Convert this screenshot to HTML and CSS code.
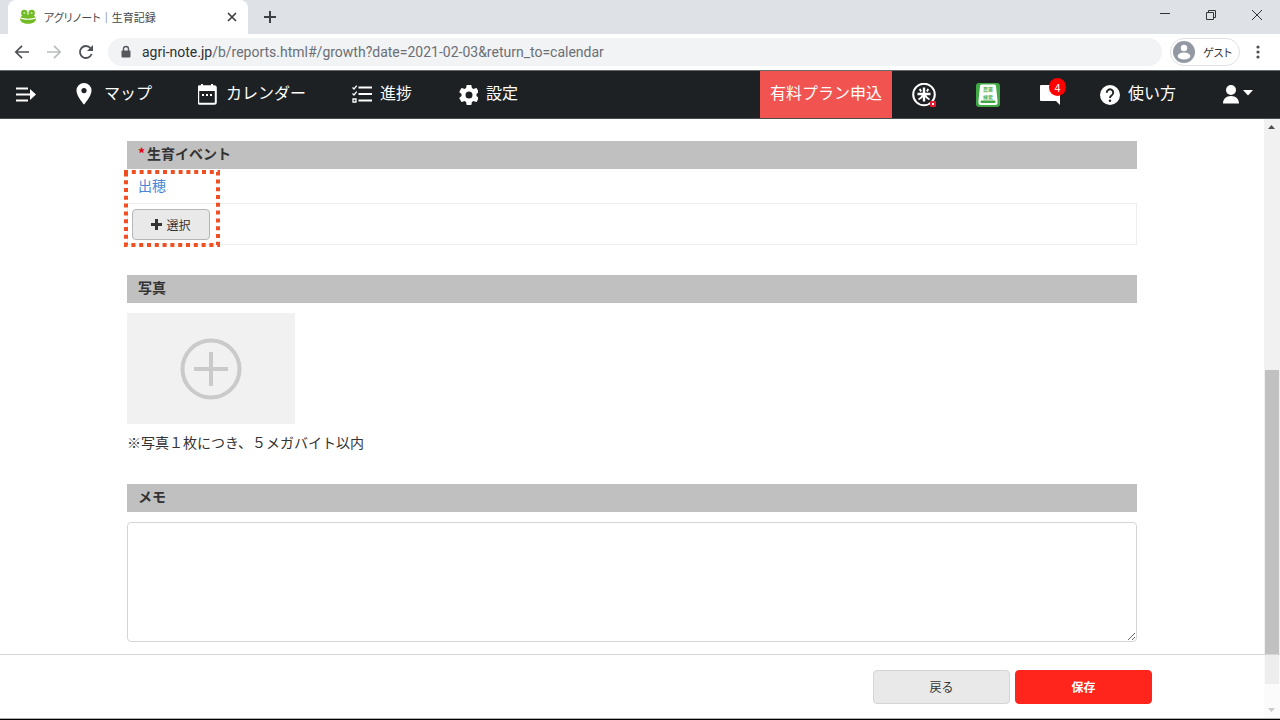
FILE: index.html
```html
<!DOCTYPE html>
<html lang="ja">
<head>
<meta charset="utf-8">
<title>アグリノート｜生育記録</title>
<link rel="stylesheet" href="styles.css">
</head>
<body>
<div class="window">
  <div class="tabstrip">
    <div class="tab">
      <svg class="favicon" width="16" height="16" viewBox="0 0 16 16"><g fill="#73bb25"><circle cx="4.300" cy="4" r="3.200"/><circle cx="11.700" cy="4" r="3.200"/><path d="M.500 8.500C1.500 6 4 5.500 8 5.500s6.500.500 7.500 3c-4.500 1.500-10.500 1.500-15 0z"/><path d="M0 9.500c4.500 1.800 11.500 1.800 16 0-.200 3.800-3.500 5.300-8 5.300S.200 13.300 0 9.500z"/></g><g fill="#c5e6a0"><circle cx="4.300" cy="4" r="1"/><circle cx="11.700" cy="4" r="1"/></g></svg>
      <span class="tab-title">アグリノート｜生育記録</span>
      <button class="plain" aria-label="タブを閉じる"><svg width="10" height="10" viewBox="0 0 10 10"><path d="M1 1l8 8M9 1L1 9" stroke="#3c4043" stroke-width="1.700"/></svg></button>
    </div>
    <button class="plain new-tab" aria-label="新しいタブ"><svg width="12" height="12" viewBox="0 0 12 12"><path d="M6 0v12M0 6h12" stroke="#3c4043" stroke-width="2"/></svg></button>
    <div class="window-controls">
      <button class="plain" aria-label="最小化"><svg width="12" height="12" viewBox="0 0 12 12"><path d="M1 4.500h10" stroke="#333"/></svg></button>
      <button class="plain" aria-label="元に戻す"><svg width="12" height="12" viewBox="0 0 12 12"><path d="M1.500 3.500h7v7h-7zM3.500 3.500v-2h7v7h-2" fill="none" stroke="#333"/></svg></button>
      <button class="plain" aria-label="閉じる"><svg width="12" height="12" viewBox="0 0 12 12"><path d="M1 1l10 10M11 1L1 11" stroke="#333"/></svg></button>
    </div>
  </div>

  <div class="toolbar">
    <button class="plain" aria-label="戻る"><svg width="16" height="16" viewBox="0 0 16 16"><path d="M15 8H2M8 1.800L1.800 8 8 14.200" fill="none" stroke="#4d5156" stroke-width="1.700"/></svg></button>
    <button class="plain" aria-label="進む"><svg width="16" height="16" viewBox="0 0 16 16"><path d="M1 8h13M8 1.800L14.200 8 8 14.200" fill="none" stroke="#babcbe" stroke-width="1.700"/></svg></button>
    <button class="plain" aria-label="再読み込み"><svg width="16" height="16" viewBox="0 0 16 16"><path d="M13.600 10A6 6 0 1 1 12.600 4.200L13.500 5.200" fill="none" stroke="#4d5156" stroke-width="1.800"/><path d="M15 1v6H9z" fill="#4d5156"/></svg></button>
    <div class="address">
      <svg width="12" height="14" viewBox="0 0 12 14"><path d="M3.500 6V4a2.500 2.500 0 0 1 5 0v2" fill="none" stroke="#55595e" stroke-width="1.400"/><rect x="1.500" y="5.500" width="9" height="7" rx="1" fill="#55595e"/></svg>
      <span class="url"><span class="host">agri-note.jp</span>/b/reports.html#/growth?date=2021-02-03&amp;return_to=calendar</span>
    </div>
    <button class="guest"><svg width="22" height="22" viewBox="0 0 22 22"><circle cx="11" cy="11" r="11" fill="#9299a2"/><circle cx="11" cy="7" r="3.200" fill="#fff"/><ellipse cx="11" cy="15" rx="6.300" ry="3.600" fill="#fff"/></svg><span>ゲスト</span></button>
    <button class="plain" aria-label="メニュー"><svg width="4" height="16" viewBox="0 0 4 16"><g fill="#4d5156"><circle cx="2" cy="3" r="1.600"/><circle cx="2" cy="8" r="1.600"/><circle cx="2" cy="13" r="1.600"/></g></svg></button>
  </div>

  <nav class="navbar">
    <button class="plain nav-menu" aria-label="メニューを開く"><svg width="22" height="20" viewBox="0 0 22 20"><path d="M1 3.500h12M1 9.500h15M1 15.500h12" stroke="#fff" stroke-width="2.200"/><path d="M15 4l6 5.500-6 5.500z" fill="#fff"/></svg></button>
    <div class="nav-main">
      <a href="#map" class="nav-link"><svg width="20" height="24" viewBox="0 0 20 24"><path fill-rule="evenodd" d="M8 0a7.500 7.500 0 0 0-7.500 7.700C.500 13 8 21.500 8 21.500s7.500-8.500 7.500-13.800A7.500 7.500 0 0 0 8 0zm0 5a2.600 2.600 0 1 1 0 5.200A2.600 2.600 0 0 1 8 5z" fill="#fff"/></svg><span class="nav-text">マップ</span></a>
      <a href="#calendar" class="nav-link"><svg width="20" height="24" viewBox="1 0 20 24"><rect x="1.200" y="3.200" width="17.600" height="17.600" rx="1.500" fill="none" stroke="#fff" stroke-width="2"/><path d="M1 3h18v5H1zM4 1h2v4H4zM14 1h2v4h-2zM5 11h2v2H5zM9 11h2v2H9zM13 11h2v2h-2z" fill="#fff"/></svg><span class="nav-text">カレンダー</span></a>
      <a href="#progress" class="nav-link"><svg width="20" height="20" viewBox="0 0 20 20"><path d="M6.500 2.500H20M6.500 9H20M6.500 15.500H20" stroke="#fff" stroke-width="2.200"/><path d="M.500 2.500L2 4 4.700.700M.500 8.500L2 10l2.700-3.300M1 14h3v3H1z" fill="none" stroke="#fff" stroke-width="1.300"/></svg><span class="nav-text">進捗</span></a>
      <a href="#settings" class="nav-link"><svg width="20" height="20" viewBox="2 3 20 20"><path fill="#fff" d="M19.430 12.980c.040-.320.070-.640.070-.980s-.030-.660-.070-.980l2.110-1.650c.190-.150.240-.420.120-.640l-2-3.460c-.120-.220-.390-.300-.610-.220l-2.490 1c-.520-.400-1.080-.730-1.690-.980l-.380-2.650A.488.488 0 0 0 14 2h-4c-.250 0-.460.180-.490.420l-.380 2.650c-.610.250-1.170.590-1.690.980l-2.490-1c-.230-.090-.490 0-.610.220l-2 3.460c-.130.220-.070.490.120.640l2.110 1.650c-.040.320-.070.650-.070.980s.030.660.070.980l-2.110 1.650c-.190.150-.240.420-.120.640l2 3.460c.120.220.390.300.610.220l2.490-1c.520.400 1.080.730 1.690.980l.380 2.650c.030.240.240.420.490.420h4c.250 0 .460-.180.490-.420l.380-2.650c.610-.250 1.170-.590 1.690-.980l2.490 1c.230.090.490 0 .610-.220l2-3.460c.120-.220.070-.490-.120-.640l-2.110-1.650zM12 15.500a3.500 3.500 0 1 1 0-7 3.500 3.500 0 0 1 0 7z" transform="translate(1 1)"/></svg><span class="nav-text">設定</span></a>
    </div>
    <a href="#plan" class="plan"><span class="nav-text">有料プラン申込</span></a>
    <div class="nav-tools">
      <a href="#rice" class="nav-link" aria-label="米"><svg width="24" height="24" viewBox="0 0 24 24"><circle cx="12" cy="11.500" r="10.800" fill="none" stroke="#fff" stroke-width="2"/><path d="M12 4.500v14M5.500 11h13" stroke="#fff" stroke-width="2.400"/><path d="M7.800 5.800l1.200 2.700M16.200 5.800L15 8.500M11 12c-1 2.200-2.500 3.500-4.500 4.500M13 12c1 2.200 2.500 3.500 4.500 4.500" fill="none" stroke="#fff" stroke-width="1.900"/><rect x="18" y="18" width="6" height="6" rx="1" fill="#e51c2f"/><path d="M20 20h2v2h-2z" fill="#fff"/></svg></a>
      <a href="#pesticide" class="nav-link" aria-label="農薬検索"><svg width="24" height="24" viewBox="0 0 24 24"><rect width="24" height="24" rx="3" fill="#40a844"/><path d="M5.500 1.500h13A1.500 1.500 0 0 1 20 3l1.500 14.500V20a2 2 0 0 1-2 2h-15a2 2 0 0 1-2-2v-2.500L4 3a1.500 1.500 0 0 1 1.500-1.500z" fill="#fff"/><rect x="4.500" y="17.500" width="15" height="2.500" rx="1" fill="#40a844"/><text x="12" y="7.500" class="book-text">農薬</text><text x="12" y="15.500" class="book-text">検索</text></svg></a>
      <a href="#messages" class="nav-link message" aria-label="お知らせ 4件"><svg width="20" height="20" viewBox="0 0 20 20"><path d="M1 0h18a1 1 0 0 1 1 1v19l-4-4H1a1 1 0 0 1-1-1V1a1 1 0 0 1 1-1z" fill="#fff"/></svg><span class="badge">4</span></a>
      <a href="#help" class="nav-link"><svg width="20" height="20" viewBox="0 0 20 20"><circle cx="10" cy="10" r="10" fill="#fff"/><path d="M6.800 7.800A3.200 3.200 0 1 1 11.800 10.200C10.500 11 10 11.600 10 13" fill="none" stroke="#1d2124" stroke-width="1.900"/><circle cx="10" cy="15.800" r="1.200" fill="#1d2124"/></svg><span class="nav-text">使い方</span></a>
      <button class="plain nav-user" aria-label="ユーザー"><svg width="31" height="20" viewBox="0 0 31 20"><circle cx="9" cy="5" r="5" fill="#fff"/><path d="M1 18.500c0-4.500 3-7.500 8-7.500s8 3 8 7.500zM21 5h10l-5 5.500z" fill="#fff"/></svg></button>
    </div>
  </nav>

  <div class="viewport">
    <main class="page">
      <form class="form" id="growth">
        <section class="section">
          <h2 class="heading"><span class="required">*</span>生育イベント</h2>
          <a href="#event" class="event">出穂</a>
          <div class="event-select"><button type="button" class="button select-button"><svg width="11" height="11" viewBox="0 0 11 11"><path d="M5.500 0v11M0 5.500h11" stroke="#333" stroke-width="3"/></svg>選択</button></div>
          <svg class="highlight" width="96" height="77" viewBox="0 0 96 77"><path d="M0 2H94V75H2V2" fill="none" stroke="#f04e23" stroke-width="4" stroke-dasharray="4 3.800"/></svg>
        </section>
        <section class="section">
          <h2 class="heading">写真</h2>
          <button type="button" class="photo" aria-label="写真を追加"><svg width="62" height="62" viewBox="0 0 62 62"><circle cx="31" cy="31" r="28.500" fill="none" stroke="#cacaca" stroke-width="4"/><path d="M31 14v34M14 31h34" stroke="#cacaca" stroke-width="4"/></svg></button>
          <p class="note">※写真１枚につき、５メガバイト以内</p>
        </section>
        <section class="section">
          <h2 class="heading"><label for="memo">メモ</label></h2>
          <textarea class="memo" id="memo"></textarea>
        </section>
      </form>
    </main>
    <div class="scrollbar">
      <svg class="arrow" width="16" height="17" viewBox="0 0 16 17"><path d="M4 10l3.500-4 3.500 4z" fill="#505050"/></svg>
      <div class="track"><div class="thumb"></div></div>
      <svg class="arrow" width="16" height="17" viewBox="0 0 16 17"><path d="M4 6l3.500 4L11 6z" fill="#505050"/></svg>
    </div>
    <footer class="actions">
      <div class="actions-inner">
        <button type="button" class="button action">戻る</button>
        <button type="submit" form="growth" class="button action save">保存</button>
      </div>
    </footer>
  </div>
</div>
</body>
</html>
```

FILE: styles.css
```css
* { box-sizing: border-box; }
body {
  margin: 0;
  background: #fff;
  color: #333;
  font-family: "Noto Sans CJK JP", sans-serif;
  font-size: 14px;
  line-height: 20px;
}
button, textarea { font: inherit; color: inherit; }
button { cursor: pointer; }
svg { display: block; flex: none; }
a { text-decoration: none; }
.window {
  display: flex;
  flex-direction: column;
  height: 100vh;
  overflow: hidden;
  border-bottom: 1px solid #000;
}
.plain { display: flex; padding: 0; border: 0; background: none; }

/* Browser tabs */
.tabstrip {
  display: flex;
  align-items: stretch;
  height: 34px;
  flex: none;
  padding-left: 8px;
  background: #dee1e6;
}
.tab {
  display: flex;
  align-items: center;
  gap: 8px;
  width: 240px;
  padding: 0 11px 0 12px;
  border-radius: 8px 8px 0 0;
  background: #fff;
}
.tab-title {
  flex: 1;
  color: #45494d;
  font-size: 11px;
  font-feature-settings: "palt";
  white-space: nowrap;
}
.new-tab { align-items: center; margin-left: 16px; }
.window-controls {
  display: flex;
  align-items: flex-start;
  gap: 34px;
  margin-left: auto;
  padding: 9px 17px 0 0;
}

/* Browser toolbar */
.toolbar {
  display: flex;
  align-items: center;
  gap: 16px;
  height: 36px;
  flex: none;
  padding: 0 20px 0 14px;
  background: #fff;
}
.address {
  display: flex;
  flex: 1;
  align-items: center;
  gap: 10px;
  min-width: 0;
  height: 28px;
  margin: 0 -8px 0 -2px;
  padding-left: 12px;
  border-radius: 14px;
  background: #f1f3f4;
}
.url {
  overflow: hidden;
  color: #6b6f74;
  font-family: Roboto, "Noto Sans", sans-serif;
  font-size: 14px;
  white-space: nowrap;
}
.host { color: #2d3033; }
.guest {
  display: flex;
  align-items: center;
  gap: 8px;
  width: 70px;
  height: 28px;
  padding: 0 2px;
  border: 1px solid #dfe1e4;
  border-radius: 14px;
  background: #fff;
  font-size: 11px;
  font-feature-settings: "palt";
  white-space: nowrap;
}

/* Application navigation */
.navbar {
  display: flex;
  align-items: center;
  height: 49px;
  flex: none;
  padding: 0 27px 0 15px;
  border-top: 1px solid #66696b;
  border-bottom: 1px solid #4b4e50;
  background: #1d2124;
  color: #fff;
  font-size: 16px;
  line-height: 24px;
}
.nav-menu { margin-right: 39px; }
.nav-main { display: flex; gap: 46px; }
.nav-link {
  display: flex;
  align-items: center;
  gap: 8px;
  color: #fff;
  white-space: nowrap;
}
.nav-text { padding-bottom: 6px; }
.plan {
  display: flex;
  align-items: center;
  justify-content: center;
  width: 132px;
  height: 100%;
  margin-left: auto;
  background: #f05350;
  color: #fff;
  white-space: nowrap;
}
.nav-tools { display: flex; align-items: center; gap: 40px; padding-left: 20px; }
.nav-user { margin-left: 6px; }
.book-text { fill: #40a844; font-size: 5px; font-weight: 500; text-anchor: middle; }
.message { position: relative; }
.badge {
  position: absolute;
  top: -7px;
  right: -6px;
  width: 17px;
  height: 18px;
  border-radius: 9px;
  background: #f00;
  font-size: 11px;
  line-height: 18px;
  text-align: center;
}

/* Page */
.viewport {
  position: relative;
  display: flex;
  flex: 1;
  min-height: 0;
}
.page { flex: 1; min-width: 0; padding: 22px 16px 0; overflow: hidden; }
.form { max-width: 1010px; margin: 0 auto; }
.section { position: relative; margin-bottom: 30px; }
.heading {
  height: 28px;
  margin: 0;
  padding: 0 11px;
  background: #c0c0c0;
  font-size: 14px;
  font-weight: 700;
  line-height: 24px;
}
.required { margin-right: 2px; color: #e60012; }
.event {
  display: block;
  padding: 6px 11px 8px;
  color: #4a86d4;
}
.event-select {
  padding: 5px 4px 4px;
  border: 1px solid #eee;
}
.button {
  display: flex;
  align-items: center;
  justify-content: center;
  gap: 4px;
  border: 1px solid #d5d5d5;
  border-radius: 4px;
  background: #e9e9e9;
  font-size: 12px;
  line-height: 20px;
}
.select-button { width: 78px; height: 31px; border-color: #b5b5b5; }
.highlight {
  position: absolute;
  top: 29px;
  left: -3px;
  pointer-events: none;
}
.photo {
  display: flex;
  align-items: center;
  justify-content: center;
  width: 168px;
  height: 111px;
  margin-top: 10px;
  padding: 0;
  border: 0;
  background: #f1f1f1;
}
.note { margin: 8px 0 0; padding-bottom: 2px; }
.memo {
  display: block;
  width: 100%;
  height: 120px;
  margin-top: 10px;
  border: 1px solid #d5d5d5;
  border-radius: 4px;
  background: #fff;
  resize: vertical;
}
.scrollbar {
  display: flex;
  flex-direction: column;
  width: 16px;
  flex: none;
  background: #f1f1f1;
}
.track {
  display: flex;
  flex: 1;
  flex-direction: column;
  justify-content: flex-end;
  padding: 0 1px 18px;
}
.thumb { height: 314px; background: #c1c1c1; }
.actions {
  position: absolute;
  right: 0;
  bottom: 0;
  left: 0;
  padding: 15px 16px 14px;
  border-top: 1px solid #d5d5d5;
  border-bottom: 1px solid #b0b0b0;
  background: rgba(255, 255, 255, 0.7);
}
.actions-inner {
  display: flex;
  justify-content: flex-end;
  gap: 5px;
  max-width: 1024px;
  margin: 0 auto;
}
.action { width: 137px; height: 34px; }
.save {
  border-color: #ff251c;
  background: #ff251c;
  color: #fff;
  font-weight: 700;
}
```
